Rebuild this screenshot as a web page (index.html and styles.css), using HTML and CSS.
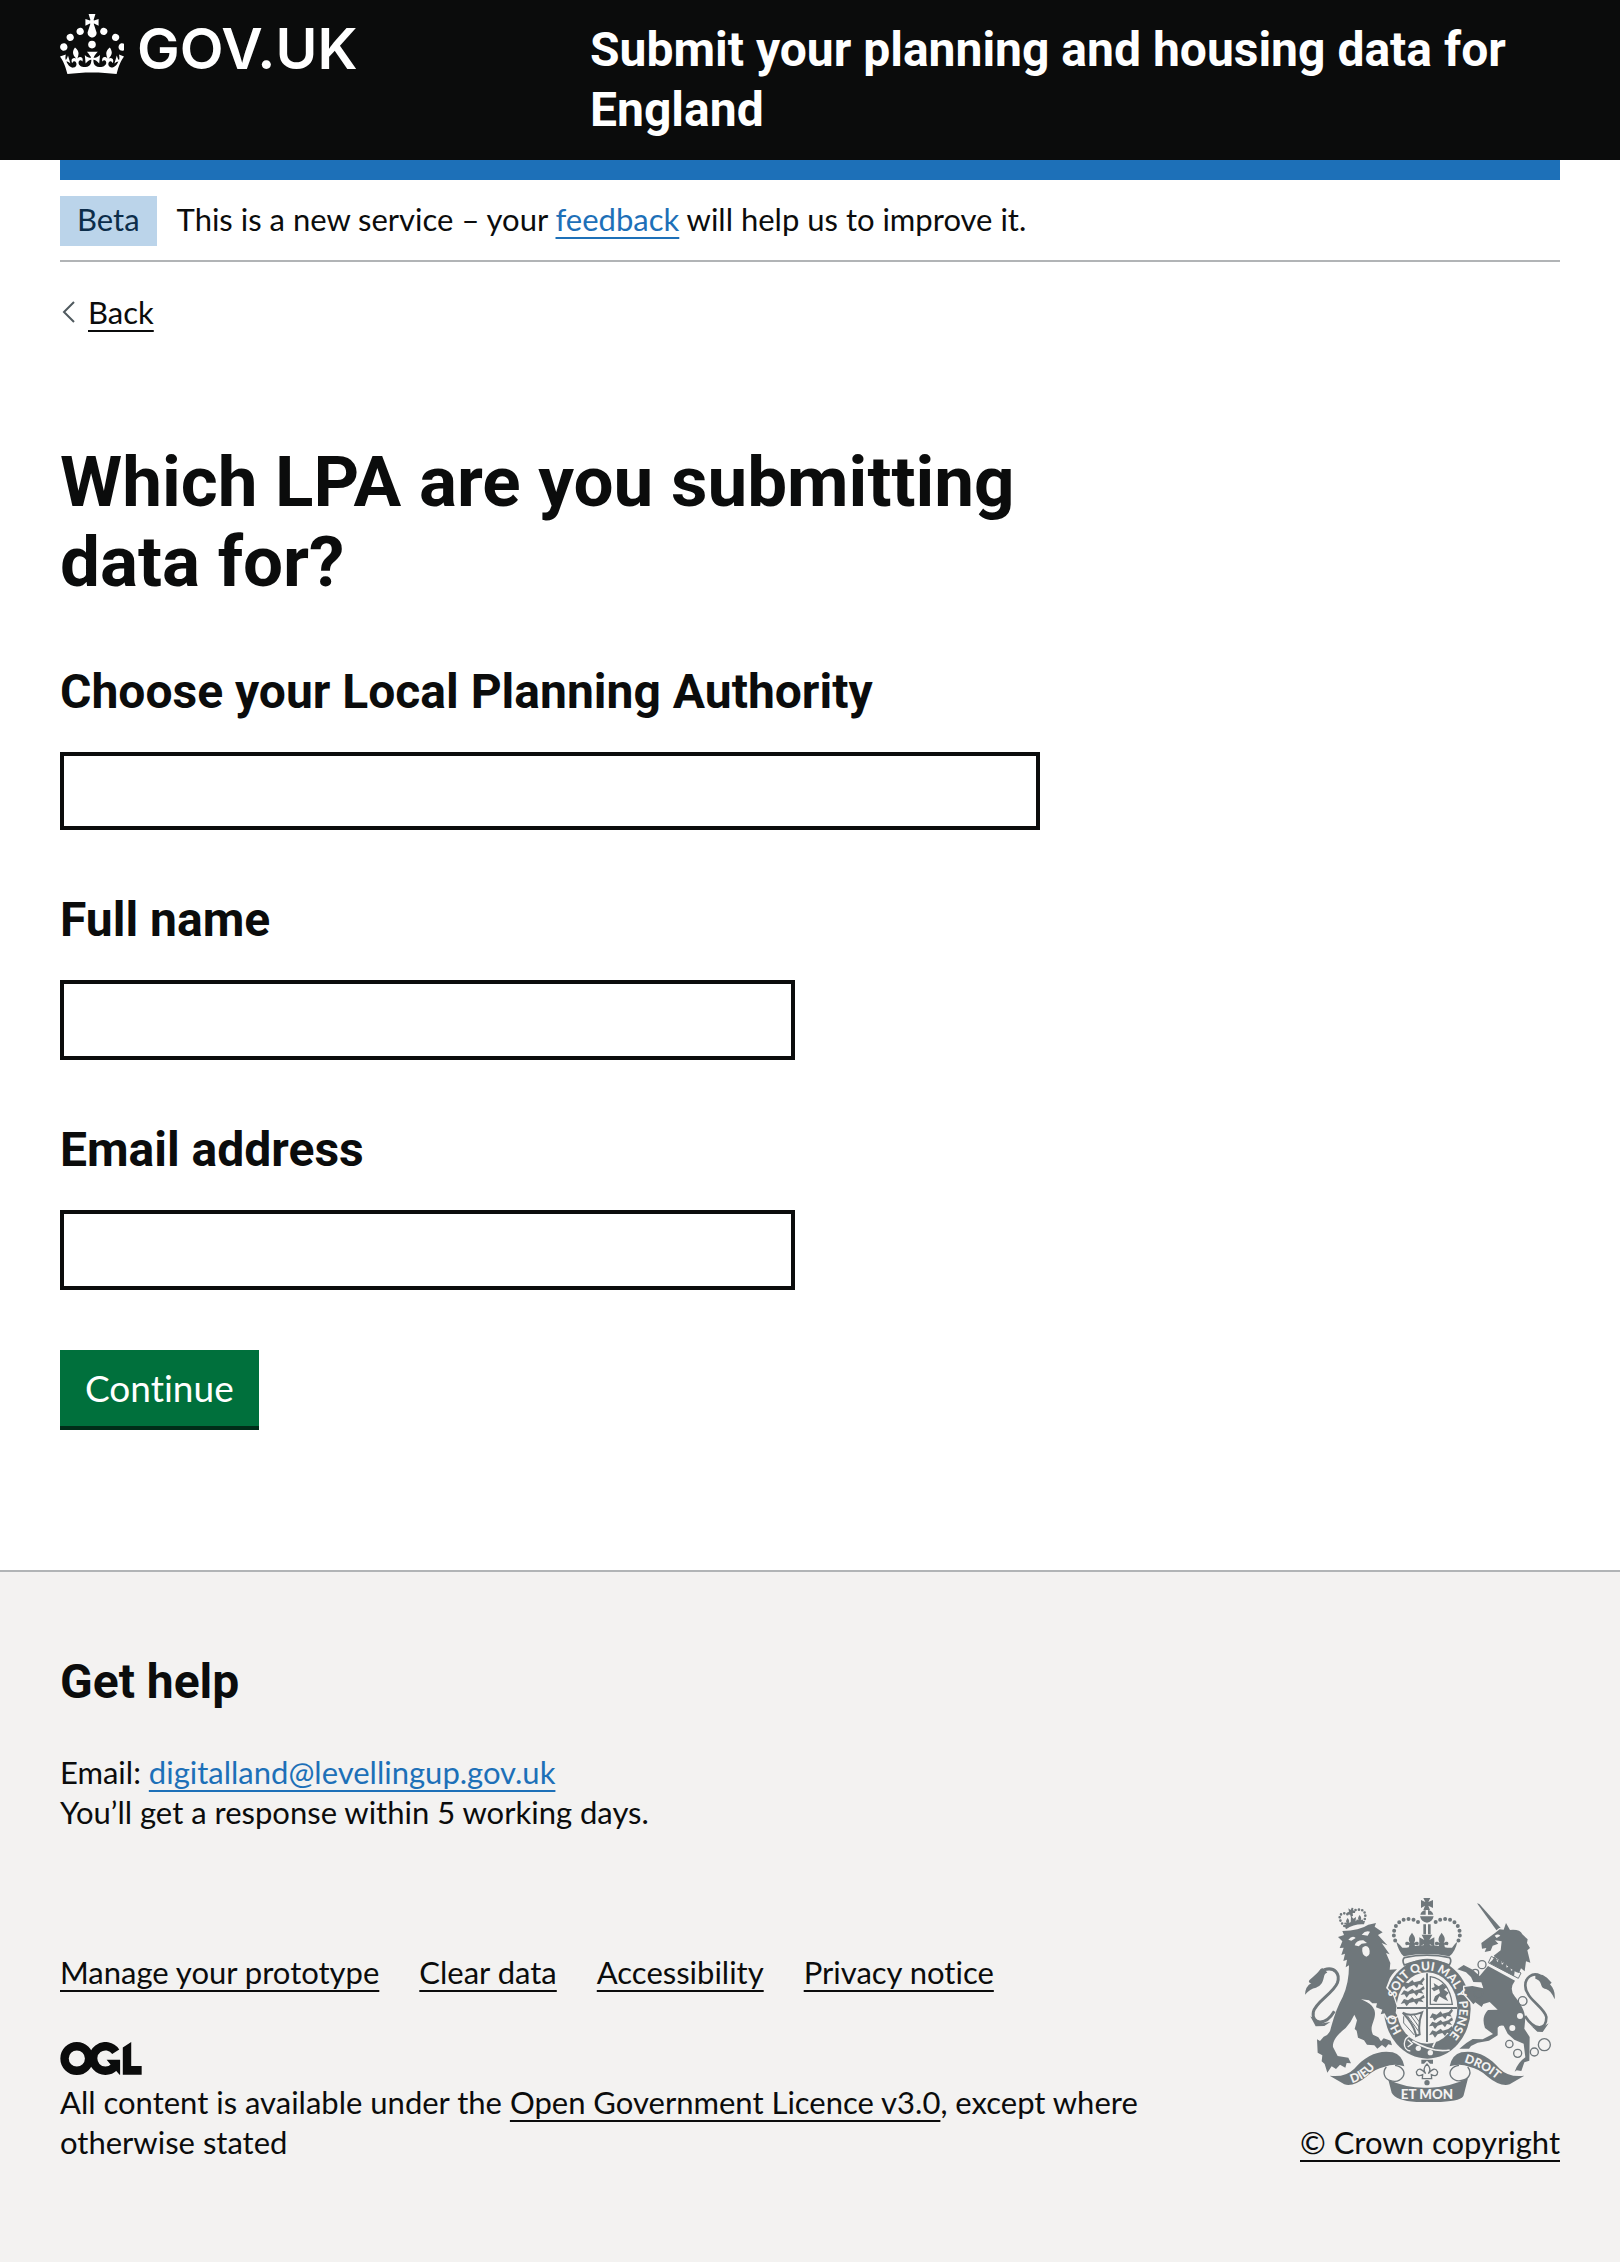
FILE: index.html
```html
<!DOCTYPE html>
<html lang="en">
<head>
<meta charset="utf-8">
<meta name="viewport" content="width=device-width, initial-scale=1">
<title>Which LPA are you submitting data for?</title>
<link rel="stylesheet" href="styles.css">
</head>
<body>
<header class="header">
  <div class="container header-grid">
    <a class="logo" href="#">
      <svg class="logo-crown" viewBox="0 0 32 30" aria-hidden="true"><path fill="currentColor" d="M22.6 10.4c-1 .4-2-.1-2.4-1-.4-.9.1-2 1-2.4.9-.4 2 .1 2.4 1s-.1 2-1 2.4m5.9 3c-.9.4-2-.1-2.4-1-.4-.9.1-2 1-2.4.9-.4 2 .1 2.4 1s-.1 2-1 2.4m3.3 4.8c-.9.4-2-.1-2.4-1-.4-.9.1-2 1-2.4.9-.4 2 .1 2.4 1s-.1 2-1 2.4M17 4.700l2.300 1.200V2.500l-2.300.7-.2-.2.9-3h-3.400l.9 3-.2.2-2.300-.7v3.400L15 4.700c.1.1.1.2.2.2l-1.300 4c-.1.2-.1.4-.1.6 0 1.100.8 2 1.900 2.200h.7c1-.2 1.900-1.100 1.900-2.100 0-.2 0-.4-.1-.6l-1.300-4c-.1-.2 0-.2.1-.3m-7.600 5.700c.9.4 2-.1 2.400-1 .4-.9-.1-2-1-2.400-.9-.4-2 .1-2.400 1s0 2 1 2.400m-5 3c.9.4 2-.1 2.400-1 .4-.9-.1-2-1-2.400-.9-.4-2 .1-2.400 1s.1 2 1 2.400m-3.200 4.800c.9.4 2-.1 2.400-1 .4-.9-.1-2-1-2.400-.9-.4-2 .1-2.400 1s0 2 1 2.400m14.800 11c4.400 0 8.600.3 12.300.8 1.100-4.500 2.400-7 3.700-8.800l-2.500-.9c.2 1.300.3 1.900 0 2.700-.4-.4-.8-1.100-1.100-2.300l-1.200 4c.7-.5 1.300-.8 2-.9-1.100 2.500-2.600 3.100-3.500 3-1.100-.2-1.700-1.200-1.500-2.100.3-1.200 1.500-1.500 2.100-.1 1.100-2.300-.8-3-2-2.300 1.900-1.900 2.100-3.500.6-5.600-2.100 1.600-2.100 3.200-1.200 5.500-1.200-1.400-3.200-.6-2.500 1.600.9-1.400 2.100-.5 1.900.8-.2 1.100-1.700 2.100-3.500 1.900-2.700-.2-2.900-2.100-2.900-3.600.7-.1 1.900.5 2.900 1.900l.4-4.300c-1.100 1.100-2.100 1.400-3.200 1.400.4-1.200 2.100-3 2.100-3h-5.400s1.700 1.900 2.100 3c-1.100 0-2.100-.2-3.200-1.400l.4 4.300c1-1.400 2.200-2 2.900-1.900-.1 1.500-.2 3.400-2.900 3.600-1.900.2-3.400-.8-3.500-1.900-.2-1.300 1-2.200 1.900-.8.7-2.300-1.200-3-2.500-1.600.9-2.200.9-3.900-1.200-5.500-1.500 2-1.300 3.700.6 5.600-1.200-.7-3.100 0-2 2.300.6-1.400 1.800-1.100 2.100.1.2.9-.3 1.900-1.500 2.100-.9.2-2.400-.5-3.500-3 .6 0 1.200.3 2 .9l-1.200-4c-.3 1.100-.7 1.900-1.100 2.300-.3-.8-.2-1.400 0-2.700l-2.900.9c1.300 1.800 2.600 4.300 3.700 8.800 3.700-.5 7.900-.8 12.300-.8"/><circle cx="16" cy="15.300" r="1.900" fill="currentColor"/></svg>
      <span class="logo-text">GOV.UK</span>
    </a>
    <a class="service-name" href="#">Submit your planning and housing data for England</a>
  </div>
</header>

<div class="container">
  <div class="phase-banner">
    <strong class="tag">Beta</strong>
    <span>This is a new service – your <a class="link" href="#">feedback</a> will help us to improve it.</span>
  </div>
  <a class="back-link" href="#">
    <svg class="back-arrow" viewBox="0 0 14 24" aria-hidden="true"><path d="M12 2 2 12l10 10" fill="none" stroke="currentColor" stroke-width="2"/></svg>
    <span class="back-text">Back</span>
  </a>
  <main class="main">
    <h1 class="title">Which LPA are you submitting data for?</h1>
    <form class="form">
      <div class="field">
        <label class="heading" for="lpa">Choose your Local Planning Authority</label>
        <input class="input input-autocomplete" id="lpa" name="lpa" type="text">
      </div>
      <div class="field">
        <label class="heading" for="name">Full name</label>
        <input class="input input-short" id="name" name="name" type="text">
      </div>
      <div class="field">
        <label class="heading" for="email">Email address</label>
        <input class="input input-short" id="email" name="email" type="email">
      </div>
      <button class="button" type="submit">Continue</button>
    </form>
  </main>
</div>

<footer class="footer">
  <div class="container">
    <h2 class="heading footer-heading">Get help</h2>
    <p class="footer-help">Email: <a class="link" href="#">digitalland@levellingup.gov.uk</a><br>You’ll get a response within 5 working days.</p>
    <div class="footer-meta">
      <div class="footer-main">
        <ul class="footer-links">
          <li><a class="footer-link" href="#">Manage your prototype</a></li>
          <li><a class="footer-link" href="#">Clear data</a></li>
          <li><a class="footer-link" href="#">Accessibility</a></li>
          <li><a class="footer-link" href="#">Privacy notice</a></li>
        </ul>
        <svg class="ogl" viewBox="0 0 483 196" aria-hidden="true">
          <g fill="none" stroke="currentColor" stroke-width="50">
            <circle cx="98" cy="98" r="73"/>
            <path d="M329 58a73 73 0 1 0-8 90"/>
          </g>
          <path fill="currentColor" d="M275 106h80v88h-3l-54-61zM371 32 421 0v143h62v51H371z"/>
        </svg>
        <p class="licence">All content is available under the <a class="footer-link" href="#">Open Government Licence v3.0</a>, except where otherwise stated</p>
      </div>
      <a class="copyright" href="#">
        <svg class="crest" viewBox="72 53 750 612" aria-hidden="true">
          <defs>
            <path id="garter-line" d="M365 457A97 113 0 1 1 480 485"/>
            <path id="scroll-left" d="M213 608Q250 598 275 570Q290 555 330 549"/>
            <path id="scroll-right" d="M549 545Q600 560 640 592Q660 606 700 622"/>
            <g id="small-fleur"><path d="M0-26C10-12 12-6 6 5C18-4 24 4 18 12L8 10L10 20H-10L-8 10L-18 12C-24 4-18-4-6 5C-12-6-10-12 0-26z"/></g>
          </defs>
          <g class="crest-ink">
            <!-- imperial crown -->
            <path d="M427 53h21l-6 12 14-6v24l-14-7 5 13h-20l5-13-12 7V59l13 6z"/>
            <path d="M418 103a19 19 0 0 1 16-14v14zM441 89a19 19 0 0 1 16 14h-16zM417 108h41q-4 18-20 19-17-1-21-19zM427 132h8v30h-8zM441 132h8v30h-8z"/>
            <g fill="none" stroke="currentColor" stroke-width="12" stroke-linecap="round" stroke-dasharray="0 15">
              <path d="M411 125C385 107 353 118 343 140C335 158 338 177 347 187"/>
              <path d="M464 125C490 107 522 118 532 140C540 158 537 177 528 187"/>
            </g>
            <use href="#small-fleur" x="393" y="183"/><use href="#small-fleur" x="482" y="183"/>
            <path d="M422 163h32l-9 16 15-8v28l-14-8 4 16h-26l5-16-14 8v-28l15 8z"/>
            <path d="M346 184q10 8 18 18h12q62-16 123 0h14q8-12 16-18-6 30-24 44-66-14-137 0-16-16-22-44z"/>
            <path fill="none" stroke="currentColor" stroke-width="5" d="M370 232q68-15 136 0 7 9-1 22-67-26-135 0-8-14 0-22z"/>
            <!-- lion crown -->
            <path d="M190 134q28-16 62-12l-3 10q-30-2-54 15zM202 84l7 5 3-7 5 1-1 8 7 1-1 6-7 0 1 9-7 2-2-9-7 3-2-6 6-3z"/>
            <path fill="none" stroke="currentColor" stroke-width="8" stroke-linecap="round" stroke-dasharray="0 10" d="M190 137C178 126 170 107 182 101Q193 96 203 104Q215 88 232 88C253 86 258 106 248 124"/>
            <use href="#small-fleur" transform="translate(200 126) scale(.5)"/><use href="#small-fleur" transform="translate(236 117) scale(.5)"/>
            <path d="M210 106l7 9 8-5-2 18-14 1z"/>
            <!-- garter -->
            <ellipse cx="439" cy="385" rx="130" ry="150"/>
          </g>
          <g class="crest-beast">
            <!-- lion -->
            <path d="M171 170L189 164 184 152Q235 151 262 133L285 128 281 139 305 156 291 164 319 195 302 188 326 222 315 218 328 248 326 268 348 267Q328 286 324 300L315 323 336 345 347 378 344 398 350 407 336 413 326 407 318 413 311 399 299 402 304 388 285 381 288 369 274 369 264 360 240 357Q282 373 282 401C281 425 264 440 276 463L292 471 300 483 308 474 329 481 333 495 322 492 314 502 303 494 289 505 280 495 258 493 249 480 231 472 227 451 221 446 228 420 220 403Q211 424 194 443C169 463 154 481 156 500L170 527 202 532 210 549 197 548 193 562 177 553 165 566 152 558 139 577 131 551 122 543 124 525 110 517 108 477 117 482 128 469Q147 464 151 438Q165 386 185 350Q204 310 204 255L194 261 198 238 187 242 192 220 181 224 188 202 176 203 184 183z"/>
            <!-- unicorn -->
            <path d="M588 69L595 71 662 146 648 152z"/>
            <path d="M601 188L642 158 656 147 668 148 675 128 687 149Q717 146 724 162L740 177 738 188 747 203 739 210 748 247 735 243 731 273 720 264 714 278Q690 270 674 250Q650 238 638 226L659 210 662 183 642 180 652 190 635 196 629 211 611 215 616 203 603 205z"/>
            <path d="M621 257L702 301Q683 325 701 348C720 373 735 393 732 424L730 445 746 470 745 541 730 546 721 572 707 570 701 574Q710 547 733 531L728 490 700 478 680 460 668 436Q654 434 650 442L650 465 624 481 590 487 570 497 564 505H535L556 488 575 476 605 477 636 461 612 443Q600 410 621 389L650 388 626 365 607 371 602 380 583 366 577 372 567 360 550 340 550 320 574 317 607 324 601 306 577 305 570 290 555 276 529 267 548 254 575 268 596 287z"/>
          </g>
          <g class="crest-ink">
            <path fill="none" stroke="currentColor" stroke-width="9" d="M130 268C160 259 179 279 169 308C156 340 103 365 97 395C91 430 132 440 160 393"/>
            <path d="M139 278C122 278 137 310 105 322Q87 325 72 343Q73 318 91 308C68 305 104 289 118 267Q128 257 139 278zM88 408L104 438 130 437 148 425 125 429z"/>
            <path fill="none" stroke="currentColor" stroke-width="3" d="M631 228L720 278 712 294 622 247z"/>
            <path d="M634 240l8-13 7 18 9-9 5 17 11-9 3 18 11-9 2 18 12-5-3 22-74-40z"/>
            <path fill="none" stroke="currentColor" stroke-width="8" d="M777 286C754 275 733 292 733 315C732 355 791 380 796 410C797 447 763 456 732 407"/>
            <path d="M763 283Q782 279 798 292L812 307 807 312Q824 330 821 357 810 330 795 326C773 321 788 303 763 295zM751 437Q777 449 803 429L785 455 769 454z"/>
          </g>
          <g class="crest-paper">
            <ellipse cx="438" cy="383" rx="91" ry="107"/>
            <path d="M202 178q12-14 22-5l-13 8zM242 163q12-14 25-9l-7 12zM244 202q12-11 20 2 7 20-8 25-15-6-12-27zM221 195q5-16 26-15l11 8-16 2-9 8zM641 166q10-7 17 0l-11 7z"/>
            <circle cx="717" cy="407" r="9"/><circle cx="694" cy="443" r="9"/>
            <circle cx="412" cy="504" r="8"/><circle cx="448" cy="517" r="8"/>
          </g>
          <g class="crest-ink">
            <path d="M435 279h6v206h-6zM348 380h180v6H348z"/>
            <!-- lions passant -->
            <path id="passant" d="M361 319l8-14 13 4 12-10 5 7 19-5 9-10 4 6-8 11 4 7-14-3-5 11-9-9-14 5-10 8-5-9zM359 344l10-14 12 4 13-9 6 6 17-5 11-9 3 9-10 5 7 9-15-3-6 10-8-9-14 4-8 10-7-10zM359 371l10-15 12 4 13-9 6 6 17-5 11-9 3 9-10 5 7 9-15-3-6 10-8-9-14 4-8 10-7-10z"/>
            <use href="#passant" transform="translate(85 94)"/>
            <!-- lion rampant -->
            <path fill="none" stroke="currentColor" stroke-width="4" d="M448 289q56 9 66 83h-66z"/>
            <path d="M458 308l15 10 12-8 12 10-8 8 14 9-9 11 8 15-12-6-15-9-9 18-9-5 5-13 15-10-3-12-15 7-8-9 10-4z"/>
            <!-- harp -->
            <path fill="none" stroke="currentColor" stroke-width="6" d="M365 397q22 13 58-1-12 30-7 66l-11 5q-3-30-40-70"/>
            <path fill="none" stroke="currentColor" stroke-width="3" d="M378 405l35 48M389 405l25 35M400 404l16 22M368 408v20l32 36"/>
          </g>
          <g class="crest-paper-line">
            <path d="M394 482q60 36 112 27M463 483l-8 18"/>
          </g>
          <path class="crest-buckle" d="M388 468c-22 0-26 42 0 44M380 478l14 12-14 10"/>
          <!-- scroll -->
          <g class="crest-ink">
            <path d="M146 586Q193 592 220 565C252 528 291 508 335 516Q363 523 370 558 340 548 311 559 281 565 256 589 218 620 190 612z"/>
            <path d="M730 586Q683 592 656 565C624 528 585 508 541 516Q513 523 506 558 536 548 565 559 595 565 620 589 658 620 686 612z"/>
            <path d="M322 598Q378 624 438 622 498 624 561 594L548 645Q544 666 438 666 346 666 332 637z"/>
            <path fill="none" stroke="currentColor" stroke-width="4" d="M316 560C303 575 310 595 326 600Q352 610 366 589C375 573 361 557 342 555M560 560C573 575 566 592 550 598Q524 608 510 589C501 573 515 557 534 555"/>
            <path fill="none" stroke="currentColor" stroke-width="4" d="M438 551Q423 566 434 580 415 556 406 575 407 591 425 583L424 595H452L451 583Q469 591 470 575 461 556 442 580 453 566 438 551z"/>
            <path d="M421 538h35v12h-9l-9-9-9 9h-8z"/><circle cx="438" cy="607" r="8"/>
          </g>
          <g class="crest-text">
            <text><textPath href="#garter-line" startOffset="4">HO</textPath></text>
            <text><textPath href="#garter-line" startOffset="108">SOIT QUI MAL Y PENSE</textPath></text>
            <text><textPath href="#scroll-left">DIEU</textPath></text>
            <text><textPath href="#scroll-right">DROIT</textPath></text>
            <text class="crest-motto" x="438" y="656" text-anchor="middle">ET MON</text>
          </g>
          <g fill="none" stroke="currentColor" stroke-width="4">
            <circle cx="603" cy="253" r="12"/><circle cx="583" cy="277" r="10"/><circle cx="592" cy="340" r="13"/><circle cx="725" cy="362" r="13"/><circle cx="685" cy="491" r="11"/><circle cx="710" cy="519" r="12"/><circle cx="760" cy="515" r="12"/><circle cx="790" cy="493" r="18"/>
          </g>
        </svg>
        <span class="copyright-text">© Crown copyright</span>
      </a>
    </div>
  </div>
</footer>
</body>
</html>
```

FILE: styles.css
```css
*, *::before, *::after { box-sizing: border-box; }

body {
  margin: 0;
  background: #fff;
  color: #0b0c0c;
  font-family: Lato, "Liberation Sans", sans-serif;
  font-size: 31px;
  line-height: 40px;
  font-variant-ligatures: none;
}

a {
  color: inherit;
  text-decoration-thickness: 2px;
  text-underline-offset: 6px;
}

svg { display: block; }

.container { margin: 0 60px; }

.header { background: #0b0c0c; color: #fff; }

.header-grid {
  display: grid;
  grid-template-columns: 530px 1fr;
  align-items: start;
}

.logo {
  display: flex;
  gap: 13px;
  padding-top: 14px;
  text-decoration: none;
}

.logo-crown { width: 64px; height: 60px; }

.logo-text {
  font: 600 57px/70px Inter, sans-serif;
}

.service-name {
  padding: 20px 0;
  font: 700 48px/60px Roboto, sans-serif;
  text-decoration: none;
}

.phase-banner {
  display: flex;
  align-items: baseline;
  gap: 20px;
  padding: 16px 0 14px;
  border-top: 20px solid #1d70b8;
  border-bottom: 2px solid #b1b4b6;
}

.tag {
  padding: 3px 17px 7px;
  background: #bbd4ea;
  color: #0c2d4a;
  font-weight: 400;
}

.link { color: #1d70b8; }

.back-link {
  display: inline-flex;
  align-items: center;
  gap: 12px;
  margin: 30px 0 110px;
  padding-left: 2px;
  vertical-align: top;
  text-decoration: none;
}

.back-arrow { width: 14px; height: 24px; color: #505a5f; }

.back-text {
  text-decoration: underline;
  text-decoration-thickness: 2px;
  text-underline-offset: 6px;
}

.main { width: 65.33%; padding-bottom: 140px; }

.title {
  margin: 0 0 60px;
  font: 700 71px/80px Roboto, sans-serif;
}

.heading {
  display: block;
  margin: 0 0 30px;
  font: 700 48px/60px Roboto, sans-serif;
}

.field { margin-bottom: 60px; }

.input {
  display: block;
  width: 100%;
  height: 80px;
  padding: 10px;
  border: 4px solid #0b0c0c;
  border-radius: 0;
  background: #fff;
  font: inherit;
}

.input-autocomplete { height: 78px; }
.input-short { width: 75%; }

.button {
  display: block;
  padding: 15px 25px;
  border: 0;
  border-bottom: 4px solid #002d18;
  border-radius: 0;
  background: #00703c;
  color: #fff;
  font: inherit;
  font-size: 37px;
  line-height: 46px;
}

.footer {
  padding: 80px 0 100px;
  border-top: 2px solid #b1b4b6;
  background: #f3f2f1;
}

.footer-heading { margin-bottom: 40px; }
.footer-help { margin: 0 0 66px; }

.footer-meta {
  display: flex;
  align-items: flex-end;
  justify-content: space-between;
  gap: 60px;
}

.footer-links {
  display: flex;
  flex-wrap: wrap;
  gap: 40px;
  margin: 0 0 50px;
  padding: 0;
  list-style: none;
}

.ogl { width: 82px; height: 33px; margin-bottom: 7px; }
.licence { margin: 0; }

.copyright {
  display: flex;
  flex-direction: column;
  align-items: center;
  gap: 20px;
  white-space: nowrap;
}

.crest { width: 250px; height: 204px; color: #6f777b; }
.crest-ink { fill: currentColor; }
.crest-beast { fill: currentColor; stroke: #f3f2f1; stroke-width: 8px; paint-order: stroke; }
.crest-paper { fill: #f3f2f1; }
.crest-paper-line { fill: none; stroke: #f3f2f1; stroke-width: 5px; }
.crest-buckle { fill: none; stroke: #f3f2f1; stroke-width: 4px; }
.crest-text { fill: #f3f2f1; font: 900 36px Lato, sans-serif; }
.crest-motto { font-size: 40px; }
```
